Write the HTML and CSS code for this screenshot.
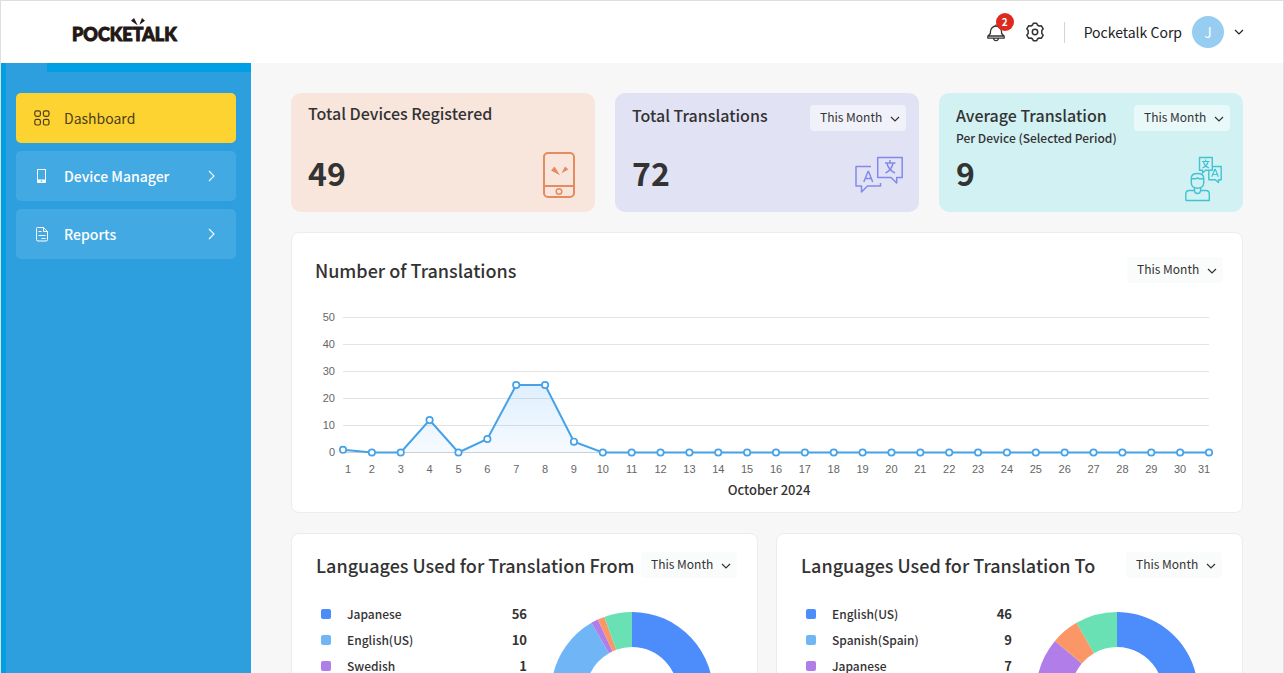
FILE: index.html
```html
<!DOCTYPE html>
<html lang="en">
<head>
<meta charset="utf-8">
<title>Pocketalk Dashboard</title>
<link rel="stylesheet" href="styles.css">
</head>
<body>
<svg class="defs" aria-hidden="true">
  <symbol id="chevron-down" viewBox="0 0 10 6"><path d="M1 1l4 4 4-4" fill="none" stroke="currentColor" stroke-width="1.2"/></symbol>
  <symbol id="chevron-right" viewBox="0 0 7 12"><path d="M1 1l5 5-5 5" fill="none" stroke="currentColor" stroke-width="1.1"/></symbol>
</svg>
<header class="topbar">
  <a class="logo" href="#">POCKETALK
    <svg class="logo-mark" viewBox="0 0 14 8" aria-hidden="true"><path d="M3 0L0 2.8 6.8 7.4zM11 0l3 2.8-5.6 4z" fill="#231815"/></svg>
  </a>
  <div class="topbar-tools">
    <button class="icon-button" aria-label="Notifications">
      <svg width="20" height="20" viewBox="0 0 20 20" fill="none" stroke="#333" stroke-width="1.3" stroke-linejoin="round" stroke-linecap="round"><path d="M4.400 11.500V10a5.600 6 0 0 1 11.200 0v1.500l2.600 2.700v1.900H1.800v-1.900zM2.200 14h15.600M7.600 16.500c.4 2.800 4.400 2.800 4.800 0M10 3.800v-.8"/></svg>
      <span class="badge">2</span>
    </button>
    <button class="icon-button" aria-label="Settings">
      <svg width="20" height="20" viewBox="0 0 20 20" fill="none" stroke="#333" stroke-width="1.5" stroke-linejoin="round"><path d="M7.600 3l.7-1.700h3.400l.7 1.700 1.700 1 2.300-.2 1.800 3-1.400 1.600v3.200l1.400 1.600-1.800 3-2.300-.2-1.700 1-.7 1.700H8.300L7.600 17l-1.700-1-2.300.2-1.800-3 1.400-1.600V8.400L1.800 6.800l1.800-3 2.300.2z"/><circle cx="10" cy="10" r="2.700"/></svg>
    </button>
    <span class="divider"></span>
    <button class="account">
      <span class="account-name">Pocketalk Corp</span>
      <span class="avatar">J</span>
      <svg class="account-arrow"><use href="#chevron-down"/></svg>
    </button>
  </div>
</header>
<div class="layout">
  <nav class="sidebar">
    <a class="nav-item active" href="#">
      <svg class="nav-icon" viewBox="0 0 16 16" fill="none" stroke="#4d3d1c" stroke-width="1.200"><rect x=".8" y=".8" width="5.600" height="5.600" rx="1.800"/><rect x="9.400" y=".8" width="5.600" height="5.600" rx="1.800"/><rect x=".8" y="9.400" width="5.600" height="5.600" rx="1.800"/><rect x="9.400" y="9.400" width="5.600" height="5.600" rx="1.800"/></svg>
      <span class="nav-label">Dashboard</span>
    </a>
    <a class="nav-item" href="#">
      <svg class="nav-icon" viewBox="0 0 16 16"><path fill="#fff" fill-rule="evenodd" d="M4 1h7a1 1 0 0 1 1 1v12a1 1 0 0 1-1 1H4a1 1 0 0 1-1-1V2a1 1 0 0 1 1-1zm0 1v9.500h7V2zM6.800 12.600v1.200h1.400v-1.200z"/></svg>
      <span class="nav-label">Device Manager</span>
      <svg class="nav-arrow"><use href="#chevron-right"/></svg>
    </a>
    <a class="nav-item" href="#">
      <svg class="nav-icon" viewBox="0 0 16 16" fill="none" stroke="#fff" stroke-width="1"><path d="M3.500 1.500h6l4 4v8a1.500 1.500 0 0 1-1.500 1.500H4a1.500 1.500 0 0 1-1.500-1.500v-11a1 1 0 0 1 1-1zM9.500 1.500v4h4M4.500 9.500h7M7.500 12.500h4M4.500 5.500h3" /></svg>
      <span class="nav-label">Reports</span>
      <svg class="nav-arrow"><use href="#chevron-right"/></svg>
    </a>
  </nav>
  <main class="content">
    <section class="stats">
      <article class="stat stat-devices">
        <div class="stat-head"><h2 class="stat-title">Total Devices Registered</h2></div>
        <div class="stat-body">
          <span class="stat-value">49</span>
          <svg class="icon-device" width="32" height="46" viewBox="0 0 32 46" fill="none" stroke="#e48b62" stroke-width="2"><rect x="1" y="1" width="30" height="44" rx="4"/><path d="M1 34h30"/><circle cx="16" cy="39.500" r="2.800" stroke-width="1.500"/><path d="M11.500 14.500L8 18.500l9 4.800zM22 14.500l3.500 3-7 3.700z" fill="#e48b62" stroke="none"/></svg>
        </div>
      </article>
      <article class="stat stat-total">
        <div class="stat-head">
          <h2 class="stat-title">Total Translations</h2>
          <label class="period"><select aria-label="Total translations period"><option>This Month</option></select><svg class="period-arrow"><use href="#chevron-down"/></svg></label>
        </div>
        <div class="stat-body">
          <span class="stat-value">72</span>
          <svg width="48" height="38" viewBox="0 0 48 38" fill="none" stroke="#8289ee" stroke-width="1.500" stroke-linejoin="round"><path d="M16 10.500H1V30h5.500v6l6-6H25.500v-3"/><path d="M8.800 26l4.200-10.500h.6L17.700 26M10.200 22.500h6.200"/><path d="M22.700 1.500h24.500v20h-5.500v5.500L36 21.500H22.700z"/><path d="M30 7h10.500M35 4v3M32 7.500c1 4 4 7.500 8 9.500M38 7.500c-1 4-3.500 7.500-7.500 9.500"/></svg>
        </div>
      </article>
      <article class="stat stat-average">
        <div class="stat-head">
          <div>
            <h2 class="stat-title">Average Translation</h2>
            <p class="stat-note">Per Device (Selected Period)</p>
          </div>
          <label class="period"><select aria-label="Average translation period"><option>This Month</option></select><svg class="period-arrow"><use href="#chevron-down"/></svg></label>
        </div>
        <div class="stat-body">
          <span class="stat-value">9</span>
          <svg class="icon-person" width="38" height="46" viewBox="0 0 38 46" fill="none" stroke="#42c3d3" stroke-width="1.400" stroke-linejoin="round"><path d="M.8 44.500V38q0-3.500 3.500-3.500h5.200v-3M.8 44.500h23.500V38q0-3.500-3.500-3.500h-5.200v-3M9.500 34.500q0 3 3 3t3-3"/><path d="M6.300 22v4.500q0 5.800 6.200 5.800t6.200-5.800V22q0-4.500-6.200-4.500T6.300 22zM6.300 22.800h4.500l1.700-1 1.700 1h4.500"/><path d="M17.500 17l3-2.700h6.800V1.500H14.500v12.800h3z"/><path d="M17 5.500h7.500M20.700 3.500v2M18.500 6q1 4 5.500 6M23 6q-1 4-5.500 6" stroke-width="1.200"/><path d="M27.500 10.500h8.700v13.300h-2.700v2.700l-3.200-2.700h-6.500v-9"/><path d="M26.800 20.800l3-7.500h.5l3 7.500M28 18.500h4.200" stroke-width="1.200"/></svg>
        </div>
      </article>
    </section>
    <section class="card trend">
      <div class="card-head">
        <h2 class="card-title">Number of Translations</h2>
        <label class="period period-plain"><select aria-label="Chart period"><option>This Month</option></select><svg class="period-arrow"><use href="#chevron-down"/></svg></label>
      </div>
      <svg class="chart" id="trend-chart" viewBox="0 0 904 166" role="img" aria-label="Translations per day">
        <defs><linearGradient id="area" x1="0" y1="0" x2="0" y2="1"><stop offset="0" stop-color="#45a2f8" stop-opacity=".17"/><stop offset="1" stop-color="#45a2f8" stop-opacity=".05"/></linearGradient></defs>
      </svg>
      <p class="chart-caption">October 2024</p>
    </section>
    <section class="languages">
      <article class="card language-card">
        <div class="card-head">
          <h2 class="card-title">Languages Used for Translation From</h2>
          <label class="period period-plain"><select aria-label="Source language period"><option>This Month</option></select><svg class="period-arrow"><use href="#chevron-down"/></svg></label>
        </div>
        <div class="language-body">
          <ul class="legend">
            <li><span class="swatch blue"></span><span class="lang">Japanese</span><b>56</b></li>
            <li><span class="swatch sky"></span><span class="lang">English(US)</span><b>10</b></li>
            <li><span class="swatch purple"></span><span class="lang">Swedish</span><b>1</b></li>
          </ul>
          <svg class="donut" viewBox="0 0 162 162" data-values="56,10,1,1,4"></svg>
        </div>
      </article>
      <article class="card language-card">
        <div class="card-head">
          <h2 class="card-title">Languages Used for Translation To</h2>
          <label class="period period-plain"><select aria-label="Target language period"><option>This Month</option></select><svg class="period-arrow"><use href="#chevron-down"/></svg></label>
        </div>
        <div class="language-body">
          <ul class="legend">
            <li><span class="swatch blue"></span><span class="lang">English(US)</span><b>46</b></li>
            <li><span class="swatch sky"></span><span class="lang">Spanish(Spain)</span><b>9</b></li>
            <li><span class="swatch purple"></span><span class="lang">Japanese</span><b>7</b></li>
          </ul>
          <svg class="donut" viewBox="0 0 162 162" data-values="46,9,7,4,6"></svg>
        </div>
      </article>
    </section>
  </main>
</div>
<script src="charts.js"></script>
</body>
</html>
```
FILE: styles.css
```css
* { box-sizing: border-box; }
body {
  margin: 0;
  height: 100vh;
  overflow: hidden;
  display: flex;
  flex-direction: column;
  border: 1px solid #dedede;
  border-bottom: 0;
  background: #f7f7f7;
  color: #333;
  font-family: "Noto Sans CJK JP", "Noto Sans", sans-serif;
  font-size: 14px;
  line-height: 20px;
}
h2, p, ul { margin: 0; padding: 0; }
ul { list-style: none; }
button, select { font: inherit; color: inherit; background: none; border: 0; padding: 0; }
a { color: inherit; text-decoration: none; }
.defs { display: none; }

.topbar {
  flex: none;
  display: flex;
  justify-content: space-between;
  align-items: center;
  height: 62px;
  padding: 0 39px 0 71px;
  background: #fff;
}
.logo {
  position: relative;
  padding-top: 3px;
  color: #231815;
  font: 900 18px/24px Lato, sans-serif;
  -webkit-text-stroke: 1px #231815;
}
.logo-mark { position: absolute; left: 59px; top: -1px; width: 14px; height: 8px; }
.topbar-tools { display: flex; align-items: center; gap: 19px; }
.icon-button { position: relative; display: block; height: 20px; }
.icon-button svg { display: block; }
.badge {
  position: absolute;
  left: 10px;
  top: -9px;
  width: 18px;
  height: 18px;
  border-radius: 9px;
  background: #dd2a1f;
  color: #fff;
  font-size: 10px;
  font-weight: 700;
  line-height: 18px;
}
.divider { width: 1px; height: 21px; background: #d5d5d5; }
.account { display: flex; align-items: center; gap: 10px; color: #222; font-size: 14px; }
.avatar {
  width: 32px;
  height: 32px;
  border-radius: 50%;
  background: #96cdf0;
  color: #fff;
  line-height: 32px;
}
.account-arrow { width: 10px; height: 6px; }

.layout { flex: 1; min-height: 0; display: flex; }
.sidebar {
  flex: 0 0 250px;
  display: flex;
  flex-direction: column;
  gap: 8px;
  padding: 30px 15px 0 10px;
  border-left: 5px solid #009fe3;
  background: linear-gradient(#009fe3, #009fe3) 41px 0 / 100% 9px no-repeat #2d9fdf;
}
.nav-item {
  display: flex;
  align-items: center;
  gap: 14px;
  height: 50px;
  padding: 0 21px 0 18px;
  border-radius: 5px;
  background: #43a9e3;
  color: #fff;
  font-size: 14px;
  font-weight: 500;
}
.nav-item.active { background: #fdd331; color: #4d3d1c; font-weight: 400; }
.nav-icon { width: 16px; height: 16px; }
.nav-label { flex: 1; }
.nav-arrow { width: 7px; height: 12px; }

.content {
  flex: 1;
  min-width: 0;
  overflow: hidden;
  display: flex;
  flex-direction: column;
  gap: 20px;
  padding: 30px 40px;
}
.stats { flex: none; display: grid; grid-template-columns: repeat(3, minmax(0, 1fr)); gap: 20px; }
.stat {
  display: flex;
  flex-direction: column;
  justify-content: space-between;
  height: 119px;
  padding: 12px 13px 13px 17px;
  border-radius: 10px;
}
.stat-devices { background: #f8e6dd; }
.stat-total { background: #e2e2f5; }
.stat-average { background: #d2f1f3; }
.stat-devices .stat-head { margin-top: -2px; }
.stat-head { display: flex; justify-content: space-between; align-items: flex-start; }
.stat-title { font-size: 16px; font-weight: 500; line-height: 20px; }
.stat-note { font-size: 12px; font-weight: 500; line-height: 26px; white-space: nowrap; }
.stat-head > div { margin-right: -16px; }
.stat-body { display: flex; justify-content: space-between; align-items: flex-end; height: 48px; padding-right: 3px; }
.stat-body svg { margin-bottom: 5px; }
.stat-body .icon-device { margin: 0 4px 1px 0; }
.stat-body .icon-person { margin: 0 4px -3px 0; }
.stat-value { font-size: 32px; font-weight: 700; line-height: 54px; }

.period {
  position: relative;
  flex: none;
  width: 96px;
  height: 26px;
  border-radius: 4px;
  background: rgba(255, 255, 255, .5);
}
.period-plain { background: #fafbfb; }
.period select {
  appearance: none;
  display: block;
  width: 100%;
  height: 26px;
  padding: 0 10px 2px;
  font-size: 12px;
}
.period-arrow { position: absolute; right: 6px; top: 11px; width: 10px; height: 6px; pointer-events: none; }

.card { border: 1px solid #ececec; border-radius: 8px; background: #fff; }
.card-head { display: flex; justify-content: space-between; align-items: center; }
.card-title { font-size: 18px; font-weight: 500; line-height: 28px; white-space: nowrap; }
.trend { flex: none; padding: 23px 23px 12px; }
.trend .period { margin-right: -4px; }
.chart { display: block; width: 100%; margin-top: 25px; }
.chart-caption { padding: 5px 0 0 4px; font-size: 13px; font-weight: 500; text-align: center; }
.tick { fill: #666; font: 11px "Liberation Sans", Arial, sans-serif; }

.languages { flex: none; display: grid; grid-template-columns: repeat(2, minmax(0, 1fr)); gap: 18px; }
.language-card { padding: 17px 20px 20px 24px; }
.language-body { display: flex; justify-content: space-between; padding: 22px 24px 0 5px; }
.legend { width: 206px; }
.legend li { display: flex; align-items: center; height: 26px; }
.lang { flex: 1; padding-left: 16px; font-size: 12px; font-weight: 500; }
.legend b { font-size: 13px; font-weight: 700; }
.swatch { width: 10px; height: 10px; border-radius: 2px; }
.blue { background: #4d8cfb; }
.sky { background: #70b6f6; }
.purple { background: #b07de9; }
.donut { width: 162px; height: 162px; margin-top: 11px; }
```
FILE: charts.js
```js
const NS = "http://www.w3.org/2000/svg";

function draw(parent, tag, attrs, text) {
  const el = document.createElementNS(NS, tag);
  for (const key in attrs) el.setAttribute(key, attrs[key]);
  if (text !== undefined) el.textContent = text;
  parent.appendChild(el);
}

function drawTrend(svg, values) {
  const left = 28, right = 894, base = 143.5, unit = 2.7;
  const step = (right - left) / (values.length - 1);
  for (let v = 0; v <= 50; v += 10) {
    const y = Math.round(base - v * unit) - 0.5;
    draw(svg, "path", { d: `M${left} ${y}H${right}`, stroke: v ? "#e3e3e3" : "#d0d0d0" });
    draw(svg, "text", { x: 20, y: y + 3, "text-anchor": "end", class: "tick" }, v);
  }
  const points = values.map((v, i) => [left + i * step, base - v * unit]);
  const line = points.map(p => p.join(" ")).join("L");
  draw(svg, "path", { d: `M${left} ${base}L${line}V${base}Z`, fill: "url(#area)" });
  draw(svg, "path", { d: "M" + line, fill: "none", stroke: "#45a2e8", "stroke-width": 2 });
  points.forEach(([x, y], i) => {
    draw(svg, "circle", { cx: x, cy: y, r: 3.2, fill: "#fff", stroke: "#45a2e8", "stroke-width": 1.7 });
    const shift = i === 0 ? 5 : i === values.length - 1 ? -5 : 0;
    draw(svg, "text", { x: x + shift, y: 164, "text-anchor": "middle", class: "tick" }, i + 1);
  });
}

function drawDonut(svg) {
  const colors = ["#4d8cfb", "#70b6f6", "#b07de9", "#fb9667", "#6ae1b5"];
  const values = svg.dataset.values.split(",").map(Number);
  const total = values.reduce((a, b) => a + b);
  const center = 81, outer = 81, inner = 46;
  const at = (angle, r) => `${center + r * Math.sin(angle)} ${center - r * Math.cos(angle)}`;
  let from = 0;
  values.forEach((v, i) => {
    const to = from + v / total * Math.PI * 2;
    const large = to - from > Math.PI ? 1 : 0;
    draw(svg, "path", {
      d: `M${at(from, outer)}A${outer} ${outer} 0 ${large} 1 ${at(to, outer)}L${at(to, inner)}A${inner} ${inner} 0 ${large} 0 ${at(from, inner)}Z`,
      fill: colors[i]
    });
    from = to;
  });
}

const daily = [1, 0, 0, 12, 0, 5, 25, 25, 4].concat(Array(22).fill(0));
drawTrend(document.getElementById("trend-chart"), daily);
document.querySelectorAll(".donut").forEach(drawDonut);
```
